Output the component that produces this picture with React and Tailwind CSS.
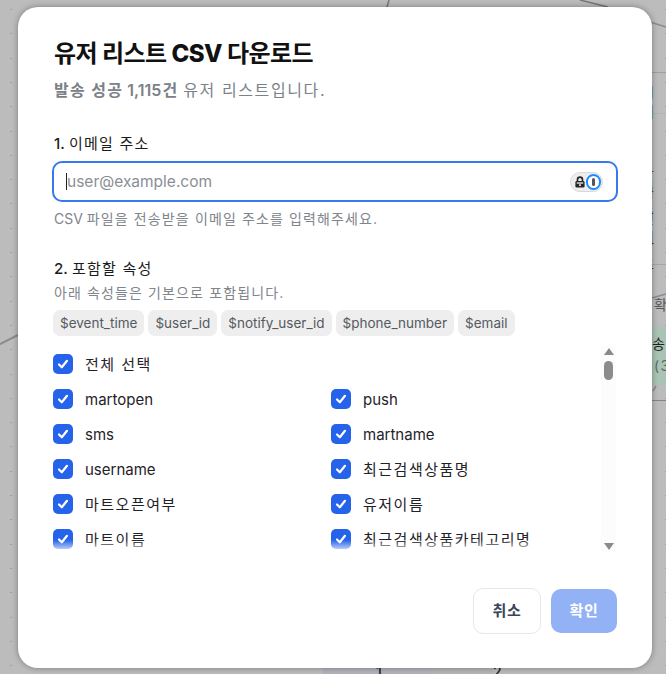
import React from "react";

const font = { fontFamily: '"Inter","Noto Sans CJK KR",sans-serif' };

const tags = ["$event_time", "$user_id", "$notify_user_id", "$phone_number", "$email"];
const rows = [
  ["martopen", "push"],
  ["sms", "martname"],
  ["username", "최근검색상품명"],
  ["마트오픈여부", "유저이름"],
  ["마트이름", "최근검색상품카테고리명"],
  ["최근구매상품명", "최근구매일"],
];
const dots = Array.from({ length: 28 }, (_, i) => i);

// Hangul runs are set a little wider than the Latin around them.
function K({ children, className = "tracking-[0.1em]" }) {
  return String(children)
    .split(/([가-힣]+(?: [가-힣]+)*)/)
    .map((part, i) =>
      i % 2 ? (
        <span key={i} className={className}>
          {part}
        </span>
      ) : (
        part
      )
    );
}

function Check({ label }) {
  return (
    <label className="flex h-[35px] items-center gap-3 text-[15px] text-[#1f2329]">
      <span className="flex h-5 w-5 shrink-0 items-center justify-center rounded-[5px] bg-[#2563eb]">
        <svg width="14" height="14" viewBox="0 0 14 14" fill="none" stroke="white" strokeWidth="2.2" strokeLinecap="round" strokeLinejoin="round">
          <path d="M3 7.5 L5.8 10.3 L11 3.8" />
        </svg>
      </span>
      <span className="whitespace-nowrap pt-[3px]">
        <K>{label}</K>
      </span>
    </label>
  );
}

function Backdrop() {
  return (
    <div className="absolute inset-0 overflow-hidden bg-[#bcbcbc] text-[14px] leading-[20px] tracking-[0.1em] text-[#3c3c3c]">
      {dots.map((i) => (
        <span key={i} className="absolute left-[10px] h-[1px] w-[2px] bg-[#9d9d9d]" style={{ top: 9 + i * 24.3 }} />
      ))}
      {dots.map((i) => (
        <span key={i} className="absolute left-[665px] h-[1px] w-[1px] bg-[#9d9d9d]" style={{ top: 9 + i * 24.3 }} />
      ))}
      <svg className="absolute inset-0" width="666" height="674" fill="none">
        <path d="M0 344 L18 335" stroke="#8a8a90" strokeWidth="2" />
        <path d="M389 0 L387 7" stroke="#77777d" strokeWidth="1.5" />
        <path d="M580 0 L608 7" stroke="#77777d" strokeWidth="1.5" />
        <path d="M650 22 L666 27" stroke="#8a8a90" strokeWidth="1.5" />
        <path d="M652 298 L666 294" stroke="#8a8a90" strokeWidth="1.5" />
        <path d="M653 391 L656 386" stroke="#8a8a90" strokeWidth="1.5" />
      </svg>
      <div className="absolute left-[640px] top-[72px] h-[1px] w-[26px] bg-[#a0a0a0]" />
      <div className="absolute left-[640px] top-[113px] h-[1px] w-[26px] bg-[#b2b2b2]" />
      <div className="absolute left-[640px] top-[264px] h-[1px] w-[26px] bg-[#a6a6a6]" />
      <div className="absolute left-[640px] top-[400px] h-[1px] w-[26px] bg-[#85858a]" />
      <span className="absolute left-[641px] top-[82px] font-medium">시지</span>
      <span className="absolute left-[641px] top-[157px]">트로</span>
      <span className="absolute left-[641px] top-[183px]">정 충</span>
      <span className="absolute left-[641px] top-[208px]">번어</span>
      <span className="absolute left-[641px] top-[234px]">나로</span>
      <span className="absolute left-[654px] top-[295px] text-[#55555a]">확</span>
      <div className="absolute left-[640px] top-[327px] h-[58px] w-[26px] bg-[#a9c4b4]" />
      <span className="absolute left-[652px] top-[334px] text-[#222]">송</span>
      <span className="absolute left-[654px] top-[356px] text-[#666]">(3</span>
      <div className="absolute left-[323px] top-[660px] h-[14px] w-[110px] bg-[#b1b4ba]" />
      <div className="absolute left-[433px] top-[660px] h-[14px] w-[60px] bg-[#b6b6b6]" />
      <span className="absolute left-[376px] top-[665px] leading-none font-medium text-[#1c2333]">1</span>
      <span className="absolute left-[493px] top-[665px] leading-none font-medium text-[#1c2333]">2</span>
    </div>
  );
}

function PasswordBadge() {
  return (
    <span className="flex h-5 w-[33px] items-center justify-between rounded-full border border-[#d9d9d9] bg-[#eeeeee] pl-[3px] pr-[1px]">
      <svg width="13" height="14" viewBox="0 0 13 14" fill="none">
        <path d="M3.8 6.5 V4.4 a2.7 2.7 0 0 1 5.4 0 V6.5" stroke="#262626" strokeWidth="1.8" />
        <rect x="1.5" y="6" width="10" height="7" rx="1.5" fill="#262626" />
        <rect x="3" y="7.4" width="7" height="1.4" fill="#f0f0f0" />
        <rect x="5.6" y="9.4" width="1.8" height="2" fill="#f0f0f0" />
      </svg>
      <span className="flex h-[16px] w-[16px] items-center justify-center rounded-full border-[2.5px] border-[#1a8cff] bg-white">
        <span className="h-[8px] w-[2.5px] rounded-sm bg-[#555]" />
      </span>
    </span>
  );
}

export default function App() {
  return (
    <div className="relative h-[674px] w-[666px] overflow-hidden" style={font}>
      <Backdrop />
      <div className="relative pl-[18px] pt-[7px]">
        <section className="flex h-[661px] w-[634px] flex-col rounded-[20px] bg-white px-9 pb-[34px] pt-[29px] shadow-[0_0_6px_rgba(0,0,0,0.35)]">
          <h2 className="whitespace-nowrap text-[24px] font-bold leading-[36px] tracking-tight text-[#111]">
            유저 리스트 <span className="font-extrabold">CSV</span> 다운로드
          </h2>
          <p className="mt-[2px] text-[16px] leading-[32px] text-[#7b8189]">
            <b className="font-semibold">
              <K className="tracking-[0.08em]">발송 성공</K> 1,115<K className="tracking-[0.1em] ml-[1px]">건</K>
            </b>{" "}
            <K>유저 리스트입니다.</K>
          </p>

          <div className="mt-[26px] text-[15px] leading-[24px] text-[#1c1c1c]">
            <b className="font-medium">1.</b> <K className="tracking-[0.08em]">이메일 주소</K>
          </div>
          <div className="-mx-[2px] mt-[5px] flex h-[41px] items-center rounded-[10px] border-2 border-[#3578f0] pl-[12px] pr-[13px]">
            <span className="h-[17px] w-[1px] bg-[#222]" />
            <span className="flex-1 text-[15.5px] text-[#8a8f96]">user@example.com</span>
            <PasswordBadge />
          </div>
          <p className="mt-[6px] text-[14px] leading-[22px] text-[#80858c]">
            <K className="tracking-[0.08em]">CSV 파일을 전송받을 이메일 주소를 입력해주세요.</K>
          </p>

          <div className="mt-[27px] text-[15px] leading-[24px] text-[#1c1c1c]">
            <b className="font-medium">2.</b> <K className="tracking-[0.08em]">포함할 속성</K>
          </div>
          <p className="mt-[2px] text-[14px] leading-[20px] text-[#80858c]">
            <K className="tracking-[0.08em]">아래 속성들은 기본으로 포함됩니다.</K>
          </p>
          <div className="-ml-[1px] mt-[7px] flex gap-1">
            {tags.map((t) => (
              <span key={t} className="flex h-[26px] items-center rounded-[7px] bg-[#eeeeee] px-[7px] text-[13.5px] text-[#555a60]">
                {t}
              </span>
            ))}
          </div>

          <div className="relative -ml-[1px] mt-[10px] flex h-[206px] gap-[1px] overflow-hidden">
            <div className="flex-1">
              <Check label="전체 선택" />
              <div className="grid grid-cols-[278px_1fr]">
                {rows.flat().map((l) => (
                  <Check key={l} label={l} />
                ))}
              </div>
            </div>
            <div className="relative flex w-[15px] shrink-0 flex-col items-center bg-[#fcfcfc]">
              <span className="mt-[2px] h-0 w-0 border-x-[5px] border-b-[7px] border-x-transparent border-b-[#8a8a8a]" />
              <span className="mt-[6px] h-[19px] w-[9px] rounded-full bg-[#8c8c8c]" />
              <span className="mb-[2px] mt-auto h-0 w-0 border-x-[5px] border-t-[7px] border-x-transparent border-t-[#8a8a8a]" />
            </div>
            <div className="pointer-events-none absolute bottom-0 left-0 right-[16px] h-[12px] bg-gradient-to-b from-white/0 to-white/90" />
          </div>

          <div className="-mr-[1px] mt-auto flex justify-end gap-[10px]">
            <button className="h-[46px] w-[68px] rounded-[10px] border border-[#e2e8f0] bg-white text-[15px] font-semibold tracking-[0.05em] text-[#3a4658]">취소</button>
            <button className="my-[1px] h-[44px] w-[66px] rounded-[10px] bg-[#93b2f5] text-[15px] font-semibold tracking-[0.05em] text-white">확인</button>
          </div>
        </section>
      </div>
    </div>
  );
}
